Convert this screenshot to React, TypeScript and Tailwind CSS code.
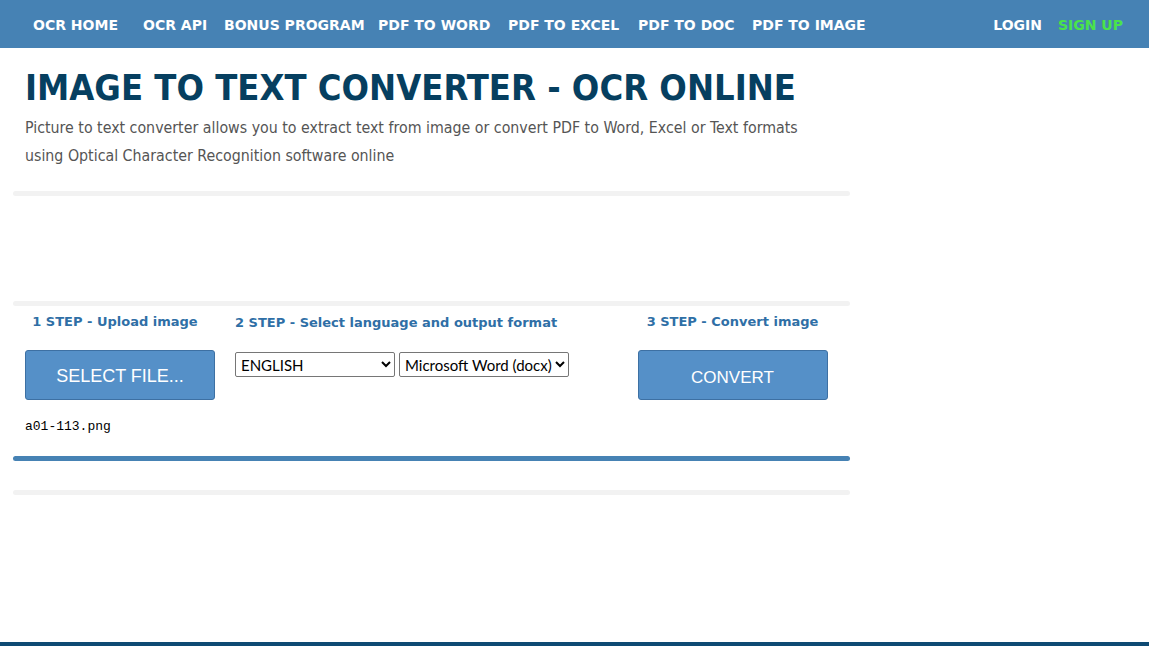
import React from "react";

const navLinks = [
  { label: "OCR HOME", w: "w-[110px]" },
  { label: "OCR API", w: "w-[81px]" },
  { label: "BONUS PROGRAM", w: "w-[154px]" },
  { label: "PDF TO WORD", w: "w-[130px]" },
  { label: "PDF TO EXCEL", w: "w-[130px]" },
  { label: "PDF TO DOC", w: "w-[114px]" },
  { label: "PDF TO IMAGE", w: "w-[130px]" },
];

function Divider() {
  return <div className="h-[5px] bg-[#f2f2f2] rounded-sm" />;
}

export default function App() {
  return (
    <div className="min-h-screen flex flex-col bg-white font-['DejaVu_Sans',sans-serif]">
      <nav className="h-[48px] bg-[#4682b4] flex items-center pt-[3px] pl-[33px] pr-[26px] text-white font-bold text-[14px]">
        {navLinks.map((l) => (
          <a key={l.label} className={`${l.w} whitespace-nowrap`}>
            {l.label}
          </a>
        ))}
        <div className="ml-auto flex items-center gap-[16px]">
          <a>LOGIN</a>
          <a className="text-[#4ae34a]">SIGN UP</a>
        </div>
      </nav>

      <main className="w-[837px] ml-[13px]">
        <header className="px-[12px] pt-[18px] pb-[21px]">
          <h1 className="font-['DejaVu_Sans_Condensed','DejaVu_Sans',sans-serif] font-bold text-[36px] leading-[44px] text-[#063f60]">
            IMAGE TO TEXT CONVERTER - OCR ONLINE
          </h1>
          <p className="mt-[4px] font-['DejaVu_Sans_Condensed','DejaVu_Sans',sans-serif] text-[15.8px] leading-[28px] text-[#555]">
            Picture to text converter allows you to extract text from image or convert PDF to Word, Excel or Text formats
            <br />
            using Optical Character Recognition software online
          </p>
        </header>

        <Divider />
        <div className="h-[105px]" />
        <Divider />

        <section className="flex pt-[7px]">
          <div className="w-[212px] pl-[12px] flex flex-col">
            <h3 className="text-center text-[13px] font-bold text-[#2f6fa6] leading-[18px] w-[180px]">1 STEP - Upload image</h3>
            <button className="mt-[19px] w-[190px] h-[50px] pt-[3px] bg-[#5590c8] border border-[#3d70a3] rounded-[3px] text-white text-[18px] font-['Liberation_Sans',sans-serif]">
              SELECT FILE...
            </button>
            <p className="mt-[17px] font-['Liberation_Mono',monospace] text-[13px] text-black">a01-113.png</p>
          </div>

          <div className="w-[396px] pl-[10px] flex flex-col">
            <h3 className="text-[13px] font-bold text-[#2f6fa6] leading-[18px] pt-[1px]">2 STEP - Select language and output format</h3>
            <div className="mt-[20px] flex gap-[4px] font-['Lato',sans-serif] text-[15px]">
              <select className="w-[160px] h-[25px] border border-[#767676] rounded-[2px] pl-[1px] text-black bg-white">
                <option>ENGLISH</option>
              </select>
              <select className="w-[170px] h-[25px] border border-[#767676] rounded-[2px] pl-[1px] text-black bg-white">
                <option>Microsoft Word (docx)</option>
              </select>
            </div>
          </div>

          <div className="w-[223px] flex flex-col items-center">
            <h3 className="text-[13px] font-bold text-[#2f6fa6] leading-[18px]">3 STEP - Convert image</h3>
            <button className="mt-[19px] w-[190px] h-[50px] pt-[5px] bg-[#5590c8] border border-[#3d70a3] rounded-[3px] text-white text-[17px] font-['Liberation_Sans',sans-serif]">
              CONVERT
            </button>
          </div>
        </section>

        <div className="mt-[19px] h-[5px] bg-[#4682b4] rounded-full" />
        <div className="h-[29px]" />
        <Divider />
      </main>

      <footer className="mt-auto h-[4px] bg-[#0e4a73]" />
    </div>
  );
}
